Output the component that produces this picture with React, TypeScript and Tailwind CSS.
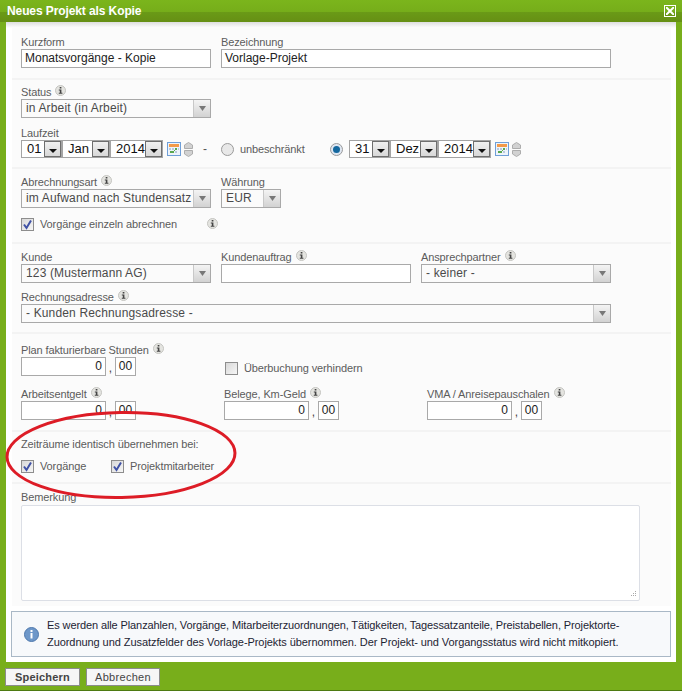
import React from 'react';

const InfoDot = ({ className = '' }: { className?: string }) => (
  <svg width="11" height="11" viewBox="0 0 11 11" className={`inline-block shrink-0 ${className}`}>
    <circle cx="5.500" cy="5.500" r="5" fill="#e4e4e0" stroke="#c4c4c0" />
    <rect x="4.700" y="2" width="1.700" height="1.500" fill="#444" />
    <path d="M3.800 4.400h2.600v3.400h1v1H3.800v-1h1V5.400h-1z" fill="#444" />
  </svg>
);

const Label = ({ text, info, className = '' }: { text: string; info?: boolean; className?: string }) => (
  <div className={`h-[14px] flex items-center gap-[4px] text-[11px] tracking-[-0.12px] leading-[14px] text-[#5c5c5c] whitespace-nowrap ${className}`}>
    <span>{text}</span>
    {info && <InfoDot className="-mt-[3px]" />}
  </div>
);

const Input = ({ value, className = '', right }: { value?: string; className?: string; right?: boolean }) => (
  <div className={`h-[19px] border border-[#a9a9a9] bg-white text-[12px] leading-[17px] text-[#222] px-[3px] whitespace-nowrap ${right ? 'text-right' : ''} ${className}`}>
    {value}
  </div>
);

const Select = ({ value, className = '' }: { value: string; className?: string }) => (
  <div className={`h-[19px] border border-[#a9a9a9] bg-[#fbfbfb] flex text-[12px] tracking-[0.15px] leading-[17px] text-[#4a4a4a] ${className}`}>
    <span className="flex-1 pl-[4px] whitespace-nowrap overflow-hidden">{value}</span>
    <span className="w-[17px] flex items-center justify-center border-l border-[#c8c8c8] bg-gradient-to-b from-[#f4f4f4] to-[#d2d2d2]">
      <svg width="7" height="5" viewBox="0 0 7 5"><path d="M0 0h7L3.500 5z" fill="#777" /></svg>
    </span>
  </div>
);

const DatePart = ({ value, className = '' }: { value: string; className?: string }) => (
  <div className={`h-[16px] flex bg-white ${className}`}>
    <span className="flex-1 pl-[5px] text-[13px] leading-[16px] text-[#111]">{value}</span>
    <span className="w-[17px] h-[16px] border border-[#6e6e6e] bg-gradient-to-b from-[#f0f0f0] to-[#d8d8d8] flex items-center justify-center">
      <svg width="8" height="4" viewBox="0 0 8 4" className="mt-[4px]"><path d="M0 0h8L4 4z" fill="#111" /></svg>
    </span>
  </div>
);

const Calendar = () => (
  <svg width="14" height="14" viewBox="0 0 14 14" className="shrink-0">
    <rect x="0.500" y="0.500" width="13" height="13" fill="#eef4fb" stroke="#6f9fd8" />
    <rect x="2" y="2" width="10" height="3" fill="#f39a4a" />
    <path d="M2 6h2v2H2zM5 6h2v2H5zM8 9h2v2H8zM11 6h1v2h-1z" fill="#b9c9dd" />
    <path d="M8 6h2v2H8zM5 9h2v2H5zM3 9h2v2H3zM7 8h1v1H7z" fill="#5aa84f" />
  </svg>
);

const Spinner = () => (
  <svg width="9" height="15" viewBox="0 0 9 15" className="shrink-0">
    <path d="M4.500 0.500L8.500 3v3.500H0.500V3z" fill="#d2d2d2" stroke="#adadad" />
    <path d="M0.500 8.500h8V12l-4 2.500L0.500 12z" fill="#d2d2d2" stroke="#adadad" />
  </svg>
);

const Radio = ({ on }: { on?: boolean }) => (
  <svg width="13" height="13" viewBox="0 0 13 13" className="shrink-0">
    <circle cx="6.500" cy="6.500" r="6" fill={on ? '#dfe7f2' : '#e8e8e8'} stroke="#9a9a9a" />
    {on && <circle cx="6.500" cy="6.500" r="3.500" fill="#14689f" />}
  </svg>
);

const Check = ({ on = true }: { on?: boolean }) => (
  <span className="w-[13px] h-[13px] shrink-0 border border-[#8d8d8d] bg-gradient-to-br from-[#d8d8d8] to-[#f6f6f6] flex items-center justify-center">
    {on && (
      <svg width="11" height="11" viewBox="0 0 11 11">
        <path d="M2 5.500L4.500 9 9 1.500" fill="none" stroke="#3f51a5" strokeWidth="2" />
      </svg>
    )}
  </span>
);

const DateGroup = ({ d, m, y }: { d: string; m: string; y: string }) => (
  <div className="flex items-center">
    <div className="h-[18px] border border-[#a4a4a4] bg-[#a4a4a4] flex gap-[2px]">
      <DatePart value={d} className="w-[39px]" />
      <DatePart value={m} className="w-[46px]" />
      <DatePart value={y} className="w-[51px]" />
    </div>
    <div className="w-[4px]" />
    <Calendar />
    <div className="w-[3px]" />
    <Spinner />
  </div>
);

const Money = ({ className = '' }: { className?: string }) => (
  <div className={`flex h-[19px] ${className}`}>
    <Input value="0" right className="w-[85px]" />
    <span className="w-[9px] text-center text-[12px] leading-[22px] text-[#444]">,</span>
    <Input value="00" className="w-[21px] !px-0 text-center" />
  </div>
);

const Section = ({ className = '', children }: { className?: string; children: React.ReactNode }) => (
  <div className={`border-t-2 border-[#f3f3f3] pl-[9px] ${className}`}>{children}</div>
);

export default function App() {
  return (
    <div className="relative w-[682px] h-[691px] flex flex-col bg-[#78ae1b] border-b border-[#4d7a12] font-['Liberation_Sans',Arial,sans-serif]">
      <div className="h-[22px] shrink-0 flex items-center justify-between pl-[7px] pr-[6px] bg-[linear-gradient(#7bb51c,#76ad1a_12px,#6a9a17_12px,#668f14)] text-white text-[12px] tracking-[-0.1px] font-bold">
        <span>Neues Projekt als Kopie</span>
        <span className="w-[12px] h-[12px] border border-white flex items-center justify-center">
          <svg width="8" height="8" viewBox="0 0 8 8"><path d="M0 0l8 8M8 0L0 8" stroke="#fff" strokeWidth="2" /></svg>
        </span>
      </div>

      <div className="mx-[6px] h-[640px] shrink-0 bg-[linear-gradient(#dedede,#ffffff_6px)] pt-[5px] pl-[6px] pr-[5px]">
        <div className="bg-[#fbfbfb] h-[579px]">
          <div className="pl-[9px] pt-[8px] h-[51px]">
            <div className="flex gap-[10px]">
              <div>
                <Label text="Kurzform" />
                <Input value="Monatsvorgänge - Kopie" className="w-[190px]" />
              </div>
              <div>
                <Label text="Bezeichnung" />
                <Input value="Vorlage-Projekt" className="w-[390px]" />
              </div>
            </div>
          </div>

          <Section className="pt-[5px] h-[89px]">
            <Label text="Status" info />
            <Select value="in Arbeit (in Arbeit)" className="w-[190px]" />
            <Label text="Laufzeit" className="mt-[8px]" />
            <div className="flex items-center">
              <DateGroup d="01" m="Jan" y="2014" />
              <span className="w-[12px] ml-[10px] text-[12px] text-[#555]">-</span>
              <div className="w-[6px]" />
              <Radio />
              <span className="ml-[6px] w-[90px] text-[11px] tracking-[-0.12px] text-[#5c5c5c]">unbeschränkt</span>
              <Radio on />
              <div className="w-[6px]" />
              <DateGroup d="31" m="Dez" y="2014" />
            </div>
          </Section>

          <Section className="pt-[6px] h-[75px]">
            <div className="flex gap-[10px]">
              <div>
                <Label text="Abrechnungsart" info />
                <Select value="im Aufwand nach Stundensatz" className="w-[190px]" />
              </div>
              <div>
                <Label text="Währung" />
                <Select value="EUR" className="w-[60px]" />
              </div>
            </div>
            <div className="flex items-center mt-[10px] text-[11px] tracking-[-0.12px] leading-[13px] text-[#5c5c5c]">
              <Check />
              <span className="ml-[6px] w-[167px]">Vorgänge einzeln abrechnen</span>
              <InfoDot className="-mt-[3px]" />
            </div>
          </Section>

          <Section className="pt-[6px] h-[90px]">
            <div className="flex gap-[10px]">
              <div>
                <Label text="Kunde" />
                <Select value="123 (Mustermann AG)" className="w-[190px]" />
              </div>
              <div>
                <Label text="Kundenauftrag" info />
                <Input className="w-[190px]" />
              </div>
              <div>
                <Label text="Ansprechpartner" info />
                <Select value="- keiner -" className="w-[190px]" />
              </div>
            </div>
            <Label text="Rechnungsadresse" info className="mt-[7px]" />
            <Select value="- Kunden Rechnungsadresse -" className="w-[590px]" />
          </Section>

          <Section className="pt-[9px] h-[98px]">
            <Label text="Plan fakturierbare Stunden" info />
            <div className="flex items-start">
              <Money className="w-[204px]" />
              <span className="mt-[5px]"><Check on={false} /></span>
              <span className="ml-[6px] mt-[5px] text-[11px] tracking-[-0.12px] leading-[13px] text-[#5c5c5c]">Überbuchung verhindern</span>
            </div>
            <div className="flex mt-[11px]">
              <div className="w-[203px]">
                <Label text="Arbeitsentgelt" info />
                <Money />
              </div>
              <div className="w-[203px]">
                <Label text="Belege, Km-Geld" info />
                <Money />
              </div>
              <div>
                <Label text="VMA / Anreisepauschalen" info />
                <Money />
              </div>
            </div>
          </Section>

          <Section className="pt-[5px] h-[52px]">
            <Label text="Zeiträume identisch übernehmen bei:" />
            <div className="flex items-center mt-[9px] text-[11px] tracking-[-0.12px] leading-[13px] text-[#5c5c5c]">
              <Check />
              <span className="ml-[6px] w-[71px]">Vorgänge</span>
              <Check />
              <span className="ml-[6px]">Projektmitarbeiter</span>
            </div>
          </Section>

          <Section className="pt-[6px]">
            <Label text="Bemerkung" />
            <div className="relative w-[619px] h-[96px] mt-[1px] border border-[#dcdfe6] bg-white rounded-[2px]">
              <svg width="8" height="8" viewBox="0 0 8 8" className="absolute right-[2px] bottom-[2px]">
                <path d="M6 1h1v1H6zM4 3h1v1H4zM6 3h1v1H6zM2 5h1v1H2zM4 5h1v1H4zM6 5h1v1H6z" fill="#a8a8a8" />
              </svg>
            </div>
          </Section>
        </div>

        <div className="-ml-[1px] mt-[5px] w-[660px] h-[46px] border border-[#a9b8c6] bg-[#f7f9fb] flex items-center">
          <svg width="15" height="15" viewBox="0 0 15 15" className="ml-[12px] shrink-0">
            <circle cx="7.500" cy="7.500" r="7" fill="#6d97c9" stroke="#4f79ad" />
            <rect x="6.500" y="3" width="2" height="2" fill="#fff" />
            <rect x="6.500" y="6" width="2" height="5.500" fill="#fff" />
          </svg>
          <p className="ml-[8px] text-[11px] tracking-[-0.11px] leading-[17px] text-[#1d2433] whitespace-nowrap">
            Es werden alle Planzahlen, Vorgänge, Mitarbeiterzuordnungen, Tätigkeiten, Tagessatzanteile, Preistabellen, Projektorte-
            <br />
            <span className="tracking-[-0.065px]">Zuordnung und Zusatzfelder des Vorlage-Projekts übernommen. Der Projekt- und Vorgangsstatus wird nicht mitkopiert.</span>
          </p>
        </div>
      </div>

      <div className="flex gap-[6px] pl-[5px] pt-[6px]">
        <button className="w-[75px] h-[18px] border border-[#8c8c8c] bg-[#f6f6f6] text-[11px] leading-[16px] font-bold text-[#444] tracking-[0.2px]">Speichern</button>
        <button className="w-[74px] h-[18px] border border-[#8c8c8c] bg-[#f6f6f6] text-[11px] leading-[16px] text-[#444] tracking-[0.3px]">Abbrechen</button>
      </div>

      <svg width="240" height="92" viewBox="0 0 240 92" className="absolute left-[4px] top-[410px] pointer-events-none">
        <ellipse cx="117" cy="45" rx="114" ry="42.500" fill="none" stroke="#dd1c26" strokeWidth="3" transform="rotate(-1 117 45)" />
      </svg>
    </div>
  );
}
